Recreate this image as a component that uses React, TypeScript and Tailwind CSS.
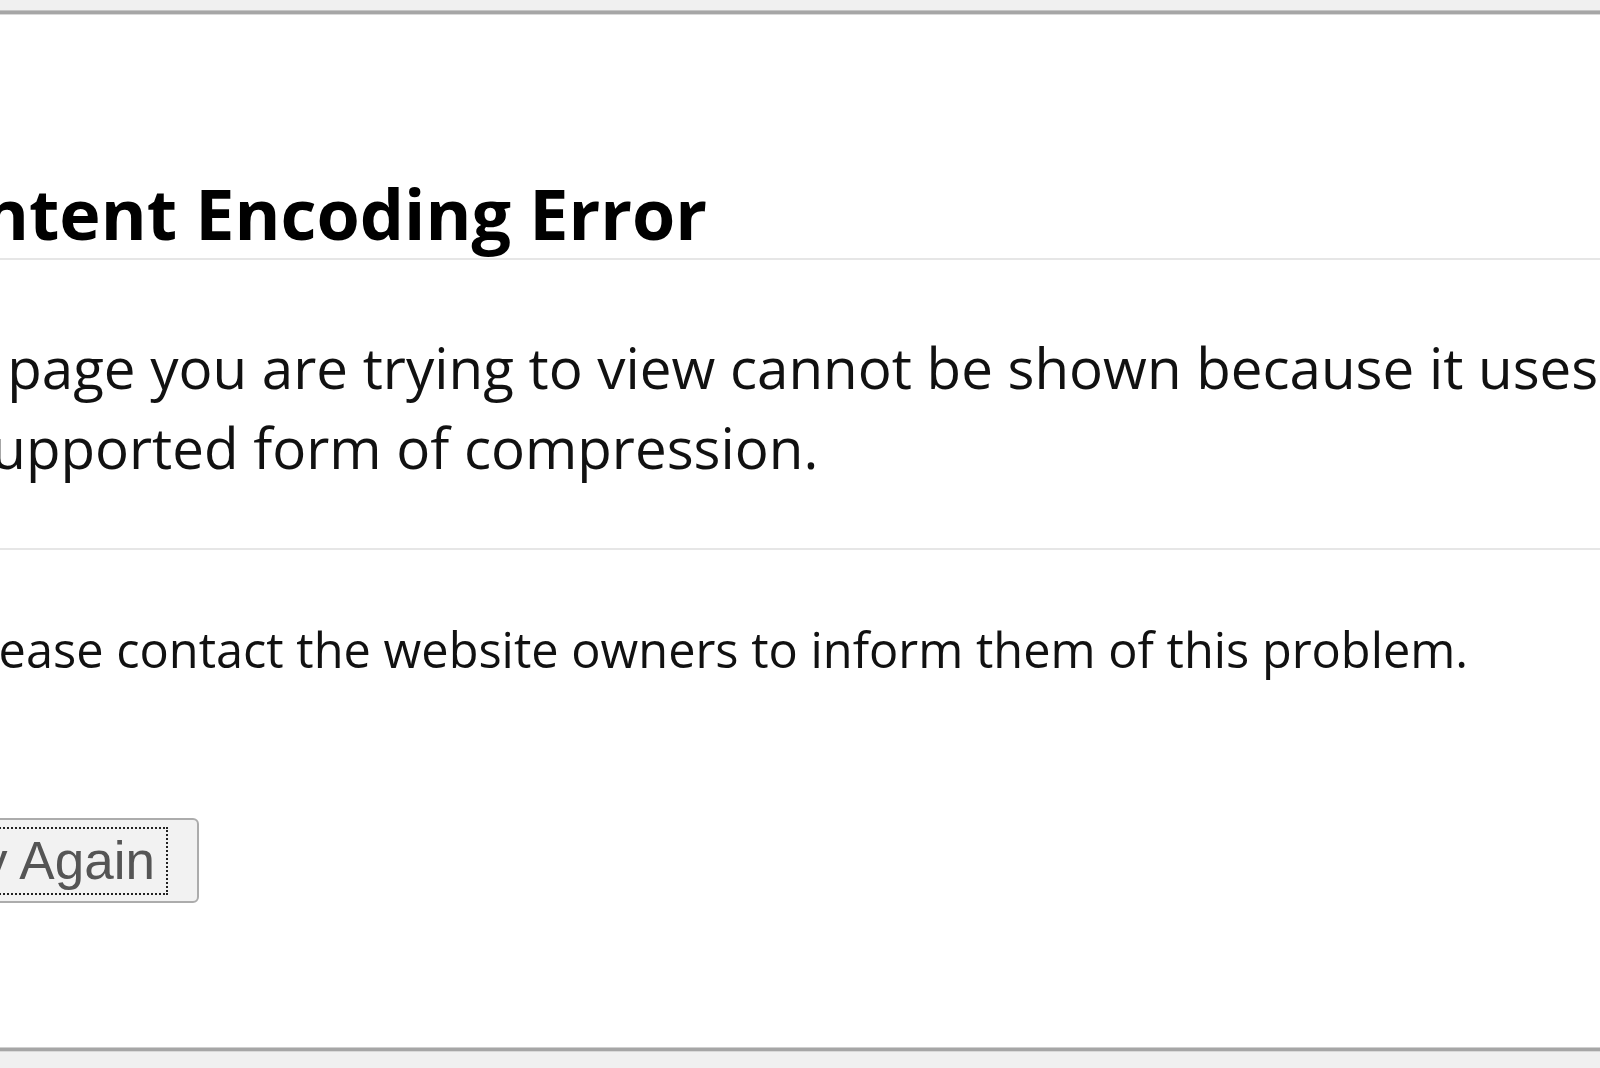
export default function App() {
  return (
    <div className="w-[1600px] h-[1068px] overflow-hidden bg-[#f0f0f0] flex flex-col font-['Open_Sans',sans-serif]">
      <div className="h-[10px] shrink-0" />
      <div className="h-[1px] bg-[#c4c4c4] shrink-0" />
      <div className="h-[3px] bg-[#a6a6a6] shrink-0" />
      <div className="h-[1px] bg-[#d9d9d9] shrink-0" />

      <main className="flex-1 bg-white overflow-hidden">
        <div className="ml-[-105px] w-[1800px]">
          <h1 className="mt-[158px] text-[70px] font-bold leading-[80px] text-black pb-[5px] border-b-2 border-[#e6e6e6] whitespace-nowrap">
            Content Encoding Error
          </h1>

          <p className="mt-[68px] text-[56.5px] leading-[80px] text-[#111] pb-[60px] border-b-2 border-[#e6e6e6] whitespace-nowrap">
            The page you are trying to view cannot be shown because it uses an invalid or
            <br />
            unsupported form of compression.
          </p>

          <ul className="mt-[67px] pl-[62px] list-disc text-[48.7px] leading-[64px] text-[#111] whitespace-nowrap">
            <li>Please contact the website owners to inform them of this problem.</li>
          </ul>

          <button className="mt-[137px] block border-2 border-[#acacac] rounded-[6px] bg-[#f2f2f2] pl-[23px] pr-[29px] pt-[7px] pb-[6px] font-['Liberation_Sans',Arial,sans-serif]">
            <span className="block border-2 border-dotted border-[#222] px-[11px] text-[53px] leading-[64px] text-[#555]">
              Try Again
            </span>
          </button>
        </div>
      </main>

      <div className="h-[1px] bg-[#d0d0d0] shrink-0" />
      <div className="h-[3px] bg-[#a6a6a6] shrink-0" />
      <div className="h-[1px] bg-[#d9d9d9] shrink-0" />
      <div className="h-[16px] shrink-0" />
    </div>
  );
}
